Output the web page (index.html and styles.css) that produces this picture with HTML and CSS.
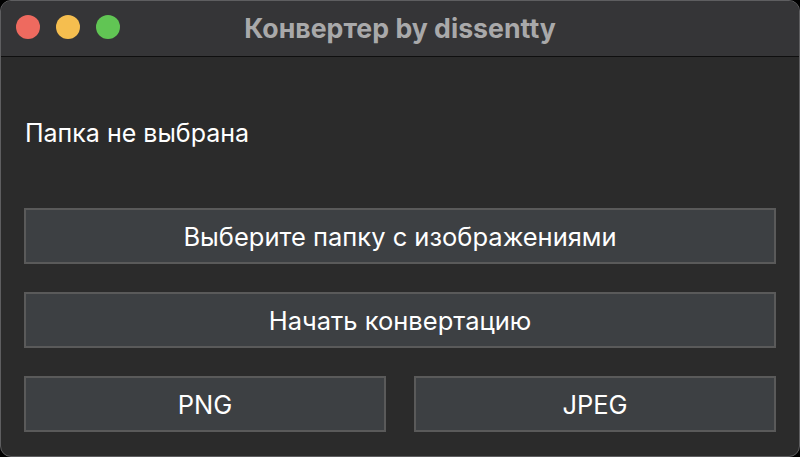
FILE: index.html
```html
<!DOCTYPE html>
<html lang="ru">
<head>
<meta charset="utf-8">
<title>Конвертер by dissentty</title>
<link rel="stylesheet" href="styles.css">
</head>
<body>
<div class="window">
  <div class="titlebar">
    <div class="lights">
      <span class="light red"></span>
      <span class="light yellow"></span>
      <span class="light green"></span>
    </div>
    <div class="title">Конвертер by dissentty</div>
  </div>
  <div class="content">
    <div class="status">Папка не выбрана</div>
    <div class="btn">Выберите папку с изображениями</div>
    <div class="btn">Начать конвертацию</div>
    <div class="row">
      <div class="btn">PNG</div>
      <div class="btn">JPEG</div>
    </div>
  </div>
</div>
</body>
</html>
```
FILE: styles.css
```css
html, body {
  margin: 0;
  padding: 0;
  background: #000;
}
body {
  width: 800px;
  height: 457px;
  overflow: hidden;
  font-family: Inter, "Noto Sans", sans-serif;
}
.window {
  box-sizing: border-box;
  width: 800px;
  height: 457px;
  border: 1px solid #5e5e60;
  border-radius: 11px;
  overflow: hidden;
  background: #2b2b2b;
  display: flex;
  flex-direction: column;
}
.titlebar {
  position: relative;
  height: 55px;
  background: #353537;
  border-bottom: 1px solid #0f0f0f;
  display: flex;
  align-items: center;
  justify-content: center;
  flex-shrink: 0;
}
.lights {
  position: absolute;
  left: 15px;
  top: 14px;
  display: flex;
  gap: 16px;
}
.light {
  width: 24px;
  height: 24px;
  border-radius: 50%;
}
.red { background: #ee6a5f; }
.yellow { background: #f5be4f; }
.green { background: #61c554; }
.title {
  color: #a9a9aa;
  font-weight: 700;
  font-size: 26.7px;
  margin-top: -2px;
}
.content {
  display: flex;
  flex-direction: column;
  padding: 60px 23px 0 23px;
  color: #fff;
}
.status {
  font-size: 25px;
  line-height: 32px;
  margin-bottom: 59px;
  padding-left: 1px;
}
.btn {
  box-sizing: border-box;
  height: 56px;
  background: #3d4043;
  border: 2px solid #5a5a5a;
  display: flex;
  align-items: center;
  justify-content: center;
  font-size: 25.5px;
  color: #fff;
  margin-bottom: 28px;
}
.row {
  display: flex;
  gap: 28px;
}
.row .btn {
  flex: 1;
}
```
